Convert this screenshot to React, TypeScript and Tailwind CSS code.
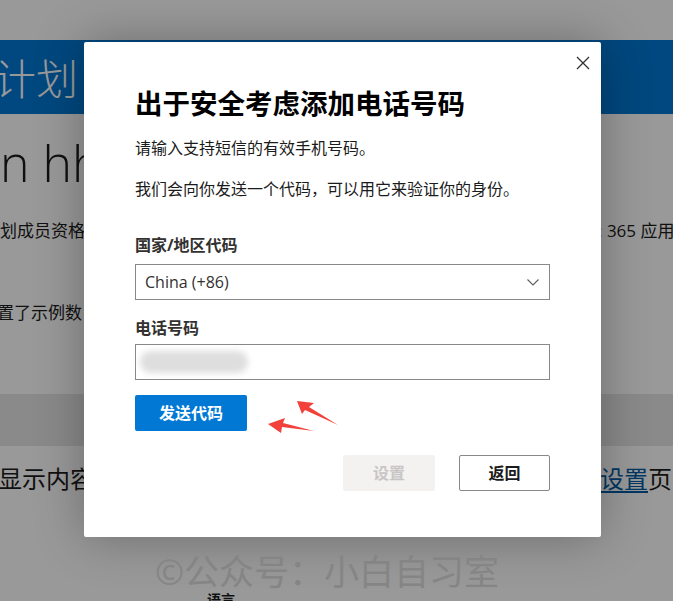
import React from 'react';

const font = { fontFamily: '"Open Sans", "Noto Sans CJK SC", sans-serif' };

const Chevron = () => (
  <svg width="14" height="14" viewBox="0 0 14 14" fill="none" stroke="#605e5c" strokeWidth="1.1">
    <path d="M1.5 4.5 L7 10 L12.5 4.5" />
  </svg>
);

const CloseIcon = () => (
  <svg width="14" height="14" viewBox="0 0 14 14" fill="none" stroke="#323130" strokeWidth="1.3">
    <path d="M1 1 L13 13 M13 1 L1 13" />
  </svg>
);

const Arrows = () => (
  <svg className="pointer-events-none absolute left-0 top-0" width="673" height="601">
    <polygon points="297,401 314,403 309,407 338,425 305,410 302,414" fill="#f2413a" />
    <polygon points="268,424 285,418 283,423 314,431 282,427 281,433" fill="#f2413a" />
  </svg>
);

export default function App() {
  return (
    <div className="relative h-[601px] w-[673px] overflow-hidden bg-white text-[#1b1b1b]" style={font}>
      {/* page behind the dialog */}
      <div className="h-[40px]" />
      <div className="flex h-[74px] items-center bg-[#0078d4] pt-1">
        <span className="-ml-[6px] whitespace-nowrap text-[42px] font-light leading-none text-white">计划</span>
      </div>
      <div className="flex h-[76px] items-end pb-[2px]">
        <span className="whitespace-nowrap text-[50px] font-light leading-none">n hh</span>
      </div>
      <div className="mt-[28px] flex items-center whitespace-nowrap text-[17px]">
        <span className="w-[598px] shrink-0">划成员资格能</span>
        <span className="shrink-0">: 365 应用</span>
      </div>
      <div className="mt-[56px] whitespace-nowrap text-[17px]">
        <span className="-ml-[3px]">置了示例数</span>
      </div>
      <div className="mt-[69px] h-[52px] bg-[#e6e6e6]" />
      <div className="mt-[15px] flex items-center whitespace-nowrap text-[24px]">
        <span className="-ml-[2px] w-[602px] shrink-0">显示内容</span>
        <span className="shrink-0">
          <a className="text-[#005da6] underline underline-offset-[3px]">设置</a>页
        </span>
      </div>
      <div className="mt-[92px] whitespace-nowrap pl-[207px] text-[14px] font-bold">语言</div>

      {/* dimmed overlay */}
      <div className="absolute inset-0 bg-black/40" />

      {/* dialog */}
      <div className="absolute left-[84px] top-[42px] h-[495px] w-[517px] rounded-[2px] bg-white shadow-[0_0_50px_rgba(0,0,0,0.3)]">
        <button className="absolute right-[11px] top-[14px] p-0">
          <CloseIcon />
        </button>
        <div className="flex flex-col px-[51px] pt-[44px]">
          <h1 className="text-[27.5px] font-bold leading-[36px] text-black">出于安全考虑添加电话号码</h1>
          <p className="mt-[15px] text-[16px] leading-[22px] text-[#1b1b1b]">请输入支持短信的有效手机号码。</p>
          <p className="mt-[19px] text-[16px] leading-[22px] text-[#1b1b1b]">我们会向你发送一个代码，可以用它来验证你的身份。</p>

          <label className="mt-[34px] text-[16px] font-bold leading-[22px] text-[#323130]">国家/地区代码</label>
          <div className="mt-[8px] flex h-[36px] items-center justify-between border border-[#8a8886] px-[9px]">
            <span className="text-[16px] text-[#323130]">China (+86)</span>
            <Chevron />
          </div>

          <label className="mt-[17px] text-[16px] font-bold leading-[22px] text-[#323130]">电话号码</label>
          <div className="mt-[5px] flex h-[36px] items-center border border-[#8a8886] px-[4px]">
            <div className="h-[22px] w-[108px] rounded-full bg-[#dedede] blur-[3px]" />
          </div>

          <div className="mt-[15px]">
            <button className="h-[36px] w-[112px] rounded-[2px] bg-[#0078d4] text-[16px] font-bold text-white">发送代码</button>
          </div>

          <div className="mt-[24px] flex justify-end gap-[24px]">
            <button className="h-[36px] w-[92px] rounded-[2px] bg-[#f3f2f1] text-[16px] font-bold text-[#c8c6c4]">设置</button>
            <button className="h-[36px] w-[91px] rounded-[2px] border border-[#8a8886] bg-white text-[16px] font-bold text-[#1b1b1b]">返回</button>
          </div>
        </div>
      </div>

      <Arrows />

      {/* watermark */}
      <div className="pointer-events-none absolute left-[155px] top-[550px] text-[35px] leading-[44px] text-[#858585]">
        ©公众号：小白自习室
      </div>
    </div>
  );
}
